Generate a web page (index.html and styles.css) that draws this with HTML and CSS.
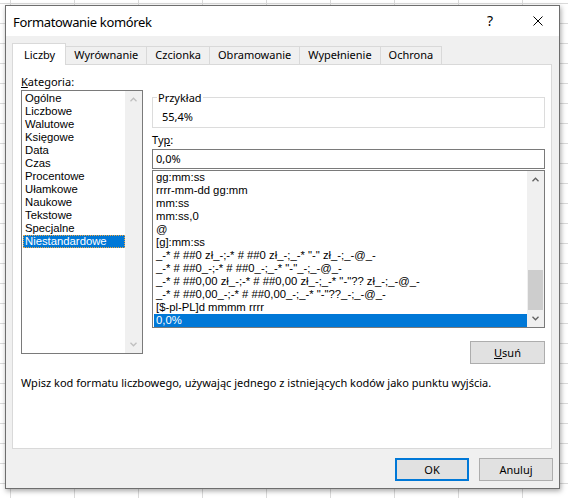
FILE: index.html
```html
<!DOCTYPE html>
<html lang="pl">
<head>
<meta charset="utf-8">
<title>Formatowanie komórek</title>
<link rel="stylesheet" href="styles.css">
</head>
<body>
<div class="dialog">
  <div class="titlebar">
    <span class="title">Formatowanie komórek</span>
    <span class="help">?</span>
    <span class="close"><svg width="10" height="10" viewBox="0 0 10 10"><path d="M0.5 0.5L9.5 9.5M9.5 0.5L0.5 9.5" stroke="#000" stroke-width="1" fill="none"/></svg></span>
  </div>
  <div class="tabs">
    <div class="tab active">Liczby</div>
    <div class="tab">Wyrównanie</div>
    <div class="tab">Czcionka</div>
    <div class="tab">Obramowanie</div>
    <div class="tab">Wypełnienie</div>
    <div class="tab">Ochrona</div>
  </div>
  <div class="panel">
    <div class="cols">
      <div class="left">
        <div class="label"><u>K</u>ategoria:</div>
        <div class="listbox cat">
          <ul class="items">
            <li>Ogólne</li>
            <li>Liczbowe</li>
            <li>Walutowe</li>
            <li>Księgowe</li>
            <li>Data</li>
            <li>Czas</li>
            <li>Procentowe</li>
            <li>Ułamkowe</li>
            <li>Naukowe</li>
            <li>Tekstowe</li>
            <li>Specjalne</li>
            <li class="sel focus">Niestandardowe</li>
          </ul>
          <div class="vscroll disabled">
            <div class="arrow"><svg width="7" height="5" viewBox="0 0 7 5"><path d="M0.5 4.2L3.5 1.2L6.5 4.2" fill="none" stroke-width="1.3"/></svg></div>
            <div class="track"></div>
            <div class="arrow"><svg width="7" height="5" viewBox="0 0 7 5"><path d="M0.5 0.8L3.5 3.8L6.5 0.8" fill="none" stroke-width="1.3"/></svg></div>
          </div>
        </div>
      </div>
      <div class="right">
        <div class="sample">
          <span class="legend">Przykład</span>
          <div class="sample-val">55,4%</div>
        </div>
        <div class="label typ">Ty<u>p</u>:</div>
        <div class="input">0,0%</div>
        <div class="listbox fmt">
          <ul class="items">
            <li>gg:mm:ss</li>
            <li>rrrr-mm-dd gg:mm</li>
            <li>mm:ss</li>
            <li>mm:ss,0</li>
            <li>@</li>
            <li>[g]:mm:ss</li>
            <li>_-* # ##0 zł_-;-* # ##0 zł_-;_-* "-" zł_-;_-@_-</li>
            <li>_-* # ##0_-;-* # ##0_-;_-* "-"_-;_-@_-</li>
            <li>_-* # ##0,00 zł_-;-* # ##0,00 zł_-;_-* "-"?? zł_-;_-@_-</li>
            <li>_-* # ##0,00_-;-* # ##0,00_-;_-* "-"??_-;_-@_-</li>
            <li>[$-pl-PL]d mmmm rrrr</li>
            <li class="sel">0,0%</li>
          </ul>
          <div class="vscroll">
            <div class="arrow"><svg width="7" height="5" viewBox="0 0 7 5"><path d="M0.5 4.2L3.5 1.2L6.5 4.2" fill="none" stroke-width="1.3"/></svg></div>
            <div class="track"><div class="thumb"></div></div>
            <div class="arrow"><svg width="7" height="5" viewBox="0 0 7 5"><path d="M0.5 0.8L3.5 3.8L6.5 0.8" fill="none" stroke-width="1.3"/></svg></div>
          </div>
        </div>
        <div class="actions"><button class="btn del"><u>U</u>suń</button></div>
      </div>
    </div>
    <p class="hint">Wpisz kod formatu liczbowego, używając jednego z istniejących kodów jako punktu wyjścia.</p>
  </div>
  <div class="footer">
    <button class="btn ok">OK</button>
    <button class="btn">Anuluj</button>
  </div>
</div>
</body>
</html>
```
FILE: styles.css
```css
html, body { margin: 0; padding: 0; }
body {
  width: 568px;
  height: 498px;
  overflow: hidden;
  background-color: #fff;
  background-image:
    linear-gradient(to right, #dadada 1px, transparent 1px),
    linear-gradient(to bottom, #dadada 1px, transparent 1px);
  background-size: 64px 20px;
  background-position: 10px 3px;
  font-family: "Noto Sans", sans-serif;
  font-size: 11px;
  color: #000;
}
.dialog {
  box-sizing: border-box;
  width: 555px;
  height: 484px;
  margin: 5px 0 0 5px;
  border: 1px solid #6e6e6e;
  background: #f0f0f0;
  box-shadow: 1px 2px 5px rgba(0,0,0,0.35);
  display: flex;
  flex-direction: column;
}
.titlebar {
  height: 30px;
  background: #fff;
  display: flex;
  align-items: center;
  flex: none;
}
.title {
  flex: 1;
  padding-left: 7px;
  font-size: 13px;
  letter-spacing: -0.35px;
  line-height: 16px;
  padding-top: 1px;
}
.help {
  width: 20px;
  text-align: center;
  font-size: 14px;
  line-height: 16px;
  margin-right: 33px;
}
.close {
  width: 10px;
  height: 10px;
  margin-right: 16px;
  display: flex;
}
.tabs {
  display: flex;
  align-items: flex-end;
  height: 22px;
  margin: 7px 0 -1px 6px;
  flex: none;
}
.tab {
  box-sizing: border-box;
  height: 18px;
  margin-bottom: 1px;
  margin-left: -1px;
  padding: 1px 8px 0;
  line-height: 13px;
  border: 1px solid #d9d9d9;
  border-bottom: none;
  background: #f0f0f0;
  white-space: nowrap;
}
.tab.active {
  height: 22px;
  margin-left: 0;
  margin-bottom: 0;
  padding: 4px 10px 0 11px;
  background: #fff;
  position: relative;
  z-index: 1;
}
.panel {
  box-sizing: border-box;
  height: 385px;
  margin: 0 7px 0 6px;
  border: 1px solid #d9d9d9;
  background: #fff;
  padding: 10px 6px 0 8px;
  flex: none;
}
.cols {
  display: flex;
  gap: 9px;
}
.left { width: 122px; flex: none; }
.right { width: 393px; flex: none; margin-top: 15px; }
.label { line-height: 13px; }
.listbox {
  box-sizing: border-box;
  border: 1px solid #7a7a7a;
  background: #fff;
  display: flex;
}
.listbox.cat { height: 264px; margin-top: 2px; }
.items {
  list-style: none;
  margin: 0;
  padding: 0;
  flex: 1;
  min-width: 0;
  overflow: hidden;
}
.items li {
  font-family: "Liberation Sans", Arial, sans-serif;
  font-size: 11.3px;
  line-height: 13px;
  height: 13px;
  padding-left: 2px;
  margin-left: 1px;
  white-space: pre;
}
.cat .items { padding-top: 1px; }
.items li.sel { background: #0078d7; color: #fff; }
.items li.focus { outline: 1px dotted #f0a640; outline-offset: -1px; }
.vscroll {
  width: 17px;
  flex: none;
  background: #f0f0f0;
  display: flex;
  flex-direction: column;
}
.arrow {
  height: 17px;
  flex: none;
  display: flex;
  align-items: center;
  justify-content: center;
}
.arrow svg path { stroke: #606060; }
.vscroll.disabled .arrow svg path { stroke: #bfbfbf; }
.track { flex: 1; display: flex; flex-direction: column; justify-content: flex-end; }
.thumb { height: 40px; margin: 0 1px; background: #cdcdcd; }
.sample {
  box-sizing: border-box;
  height: 31px;
  margin-top: 7px;
  border: 1px solid #dcdcdc;
  position: relative;
  padding: 12px 0 0 9px;
}
.legend {
  position: absolute;
  top: -7px;
  left: 4px;
  padding: 0 1px;
  background: #fff;
  line-height: 13px;
}
.sample-val { line-height: 13px; }
.typ { margin-top: 5px; }
.input {
  box-sizing: border-box;
  height: 20px;
  margin-top: 3px;
  border: 1px solid #7a7a7a;
  padding-left: 3px;
  line-height: 18px;
}
.listbox.fmt { height: 158px; margin-top: 1px; }
.actions { display: flex; justify-content: flex-end; margin-top: 13px; }
.btn {
  box-sizing: border-box;
  height: 23px;
  width: 74px;
  border: 1px solid #adadad;
  background: #e1e1e1;
  font-family: "Noto Sans", sans-serif;
  font-size: 11px;
  color: #000;
  padding: 0;
  margin: 0;
  line-height: 13px;
}
.btn.del { width: 75px; }
.btn.ok { border: 2px solid #0078d7; }
.hint { margin: 12px 0 0; line-height: 13px; }
.footer {
  display: flex;
  justify-content: flex-end;
  gap: 10px;
  margin-top: 9px;
  padding-right: 6px;
  flex: none;
}
```
